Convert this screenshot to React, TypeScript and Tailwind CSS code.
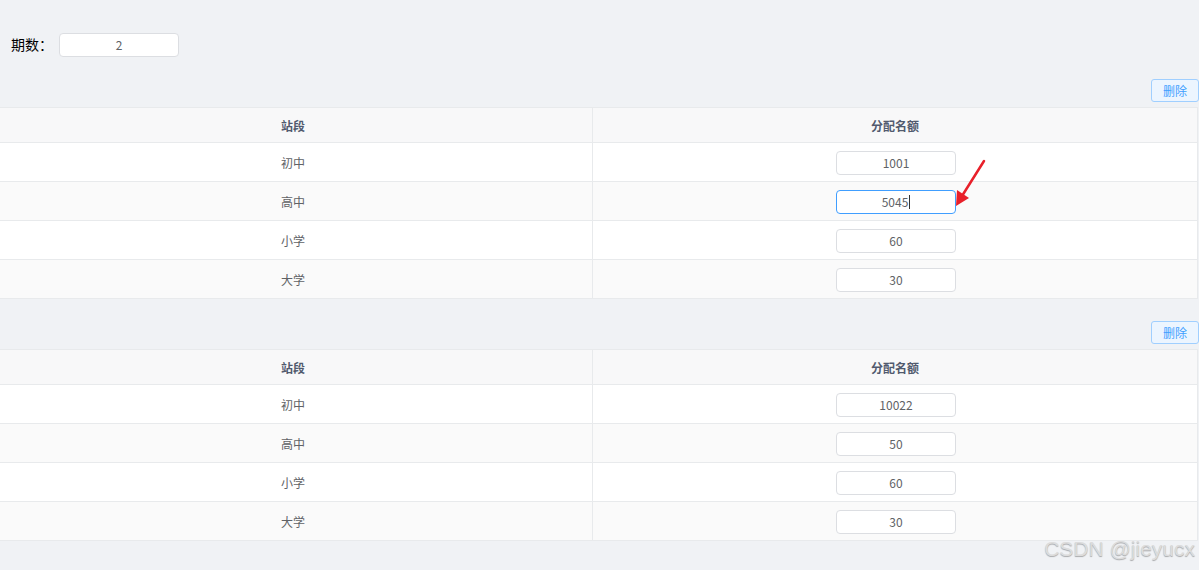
import React from "react";

const font = { fontFamily: '"Noto Sans CJK SC", "Noto Sans", sans-serif' };

type Row = { name: string; value: string; focused?: boolean };

const Table = ({ rows }: { rows: Row[] }) => (
  <div className="w-[1198px] border-t border-r border-[#e8eaec] text-[12px]">
    <div className="flex h-[35px] bg-[#f8f8f9] border-b border-[#e8eaec] font-bold text-[#515a6e]">
      <div className="w-[593px] flex items-center justify-center border-r border-[#e8eaec] pt-[2px] pr-[6px]">站段</div>
      <div className="flex-1 flex items-center justify-center pt-[2px]">分配名额</div>
    </div>
    {rows.map((r, i) => (
      <div
        key={i}
        className={`flex h-[39px] border-b border-[#e8eaec] text-[#606266] ${i % 2 === 1 ? "bg-[#fafafa]" : "bg-white"}`}
      >
        <div className="w-[593px] flex items-center justify-center border-r border-[#e8eaec] pt-[2px] pr-[6px]">{r.name}</div>
        <div className="flex-1 flex items-center justify-center pl-[2px] pt-px">
          <div
            className={`relative w-[120px] h-[24px] rounded-[4px] bg-white border flex items-center justify-center pt-px ${r.focused ? "border-[#409eff]" : "border-[#dcdee2]"}`}
          >
            <span>{r.value}</span>
            {r.focused && <span className="inline-block w-px h-[14px] bg-[#333] ml-px" />}
          </div>
        </div>
      </div>
    ))}
  </div>
);

const DeleteBtn = () => (
  <div className="flex justify-end w-[1199px]">
    <button className="w-[48px] h-[23px] rounded-[3px] border border-[#a0cfff] bg-[#ecf5ff] text-[#409eff] text-[12px] flex items-center justify-center">
      删除
    </button>
  </div>
);

export default function App() {
  return (
    <div className="relative w-[1199px] h-[570px] bg-[#f0f2f5] overflow-hidden pt-[33px]" style={font}>
      <div className="flex items-center h-[24px] pl-[11px]">
        <span className="text-[14px] text-[#000] mr-[6px] -mt-[2px]">期数：</span>
        <div className="w-[120px] h-[24px] rounded-[4px] bg-white border border-[#dcdee2] flex items-center justify-center text-[12px] text-[#606266]">
          2
        </div>
      </div>

      <div className="mt-[22px]">
        <DeleteBtn />
        <div className="mt-[5px]">
          <Table
            rows={[
              { name: "初中", value: "1001" },
              { name: "高中", value: "5045", focused: true },
              { name: "小学", value: "60" },
              { name: "大学", value: "30" },
            ]}
          />
        </div>
      </div>

      <div className="mt-[22px]">
        <DeleteBtn />
        <div className="mt-[5px]">
          <Table
            rows={[
              { name: "初中", value: "10022" },
              { name: "高中", value: "50" },
              { name: "小学", value: "60" },
              { name: "大学", value: "30" },
            ]}
          />
        </div>
      </div>

      <svg className="absolute left-0 top-0 pointer-events-none" width="1199" height="570">
        <line x1="984" y1="161" x2="962" y2="196" stroke="#e8202a" strokeWidth="2.5" strokeLinecap="round" />
        <polygon points="956,206 957,190 969,198" fill="#e8202a" />
      </svg>

      <div
        className="absolute right-[4px] bottom-[6px] text-[21px] text-[#dcdcdc]"
        style={{ fontFamily: '"Liberation Sans", Arial, sans-serif', textShadow: "0 1px 1px rgba(0,0,0,0.3)" }}
      >
        CSDN @jieyucx
      </div>
    </div>
  );
}
